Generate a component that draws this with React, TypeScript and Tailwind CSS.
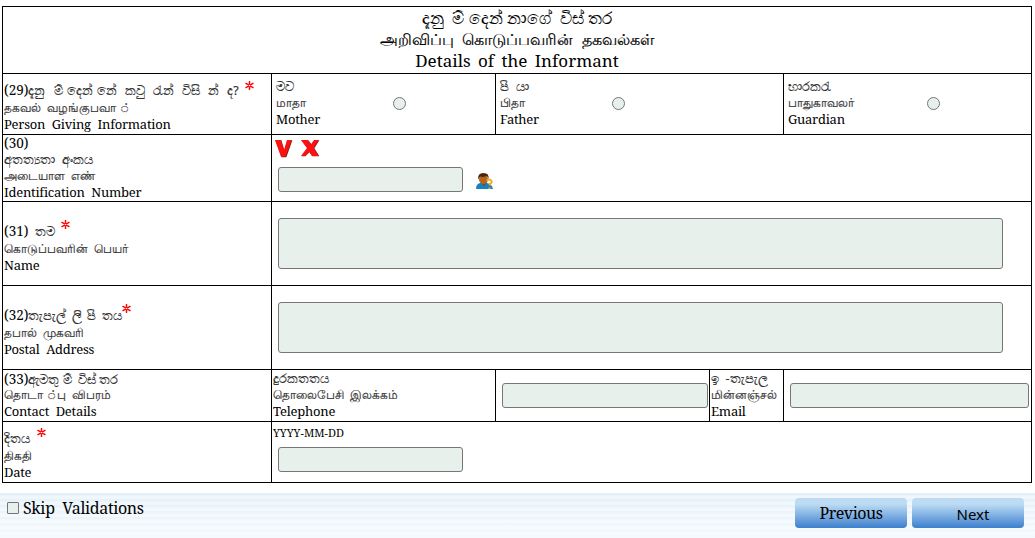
import type { ReactNode } from "react";

const field = "shrink-0 rounded-[3px] border border-[#767676] bg-[#e7f0ea] outline-none";

function Line({ children, className = "" }: { children: ReactNode; className?: string }) {
  return <div className={`whitespace-pre ${className}`}>{children}</div>;
}

function Star({ className = "" }: { className?: string }) {
  return (
    <svg viewBox="0 0 8 8" className={`inline-block h-[9px] w-[9px] ${className}`} fill="none" stroke="#f00" strokeWidth="1.3" strokeLinecap="round">
      <path d="M4 .5v7M.9 2.2l6.2 3.6M.9 5.8l6.2-3.6" />
      <circle cx="4" cy="4" r=".6" fill="#fff" stroke="none" />
    </svg>
  );
}

function Cell({ children, className = "" }: { children?: ReactNode; className?: string }) {
  return <div className={`bg-white ${className}`}>{children}</div>;
}

const sinhala = "font-['Noto_Sans',sans-serif] text-[12.5px] text-[#333] [-webkit-text-stroke:0.2px]";
const tamil = "font-['Noto_Sans',sans-serif] text-[12px] text-[#333] [-webkit-text-stroke:0.2px]";
const latin = "font-['Noto_Serif','Liberation_Serif',serif] text-[13px] tracking-[-0.25px] [word-spacing:0.2px]";
const number = "font-['Noto_Serif','Liberation_Serif',serif] text-[13.5px] text-black [-webkit-text-stroke:0px]";

function Choice({ si, ta, en, radio, name }: { si: string; ta: string; en: string; radio: string; name: string }) {
  return (
    <div className="flex pl-1 pt-[5px]">
      <div className={`shrink-0 ${radio}`}>
        <Line className={`h-4 leading-4 ${sinhala}`}>{si}</Line>
        <Line className={`h-4 leading-4 ${tamil}`}>{ta}</Line>
        <Line className={`h-4 leading-4 ${latin}`}>{en}</Line>
      </div>
      <input type="radio" name="informant" aria-label={name} className="mt-[18px] h-[13px] w-[13px] appearance-none rounded-full border border-[#767676] bg-[#e7f0ea]" />
    </div>
  );
}

export default function App() {
  return (
    <main className="h-[538px] w-[1035px] overflow-hidden bg-white pt-1.5 font-['Noto_Serif','Liberation_Serif',serif] text-black">
      <section className="ml-0.5 grid w-[1030px] grid-cols-[268px_223px_213px_73px_247px] grid-rows-[66px_60px_66px_83px_83px_51px_60px] gap-px border border-black bg-black">
        <Cell className="col-span-5 text-center">
          <Line className="h-[21px] font-['Noto_Sans',sans-serif] text-[17px] leading-[22px] [-webkit-text-stroke:0.2px]">දැනු  ම් දෙන් නාගේ  විස් තර</Line>
          <Line className="h-[21px] font-['Noto_Sans',sans-serif] text-[16px] leading-[22px] [-webkit-text-stroke:0.2px]">அறிவிப்பு  கொடுப்பவரின்  தகவல்கள்</Line>
          <Line className="h-[22px] text-[17px] leading-[23px] [word-spacing:3px]">Details of the Informant</Line>
        </Cell>

        <Cell className="pl-px pt-[6px]">
          <Line className={`h-5 leading-5 [word-spacing:0.8px] ${sinhala}`}><span className={number}>(29)</span>දැනු  ම් දෙන් නේ  කවු  රැන්  විසි  න්  ද? <Star className="ml-0.5 align-[5px]" /></Line>
          <Line className={`h-4 leading-4 ${tamil}`}>தகவல்  வழங்குபவா ்</Line>
          <Line className={`h-4 leading-[17px] ${latin}`}>Person  Giving  Information</Line>
        </Cell>
        <Cell><Choice si="මව" ta="மாதா" en="Mother" radio="w-[117px]" name="Mother" /></Cell>
        <Cell className="col-span-2"><Choice si="පි  යා" ta="பிதா" en="Father" radio="w-[112px]" name="Father" /></Cell>
        <Cell><Choice si="භාරකරැ" ta="பாதுகாவலர்" en="Guardian" radio="w-[139px]" name="Guardian" /></Cell>

        <Cell className="pl-px">
          <Line className={`h-[17px] leading-4 ${number}`}>(30)</Line>
          <Line className={`h-4 leading-4 ${sinhala}`}>අතත්‍යතා  අංකය</Line>
          <Line className={`h-4 leading-4 ${tamil}`}>அடையாள  எண்</Line>
          <Line className={`h-4 leading-4 ${latin}`}>Identification  Number</Line>
        </Cell>
        <Cell className="col-span-4 pl-[3px] pt-[5px]">
          <svg width="46" height="18" viewBox="0 0 46 18" className="block">
            <path d="M0 0h6l3 10 3-10h5l-6 17H6ZM26 0h7l3 4 3-4h5l-5 8 5 8h-7l-3-4-4 4h-4l6-8Z" transform="translate(.4 .2)" fill="#8a2420" />
            <path d="M0 0h6l3 10 3-10h4.500l-6 16.500H6ZM26 0h6.500l3.500 4.500 3-4.500h4.500l-5 8 5 8h-6.500l-3-4.500-4 4.500h-4l6-8Z" fill="#fe1010" />
          </svg>
          <div className="flex items-center pl-[3px] pt-[9px]">
            <input aria-label="Identification Number" className={`h-[25px] w-[185px] ${field}`} />
            <svg width="18" height="17" viewBox="0 0 18 17" className="ml-[13px] mt-[3px]">
              <path d="M0 16q0-5 4-6h7q5 1 6 6Z" fill="#1681c2" />
              <path d="M5 9l3 4 3-4Z" fill="#7b461c" />
              <ellipse cx="7.500" cy="6.500" rx="4.500" ry="4.500" fill="#b5651d" />
              <path d="M2.500 6.500Q1 0 7.500 0q6 0 5 6L11 3 7 4 4 3.500Z" fill="#50240b" />
              <path d="M11 8q1-2 3-1.300 3.500 2 0 4.300l-.5 1.500M13.500 14.500v1.500" stroke="#f5ad19" strokeWidth="2" fill="none" />
            </svg>
          </div>
        </Cell>

        <Cell className="pl-px pt-[18px]">
          <Line className={`h-5 leading-5 ${sinhala}`}><span className={number}>(31)  </span>තම <Star className="ml-0.5 align-[7px]" /></Line>
          <Line className={`h-[17px] leading-[17px] ${tamil}`}>கொடுப்பவரின்  பெயர்</Line>
          <Line className={`h-4 leading-[17px] ${latin}`}>Name</Line>
        </Cell>
        <Cell className="col-span-4 pl-1.5 pt-4">
          <textarea aria-label="Name" className={`block h-[51px] w-[725px] resize-none ${field}`} />
        </Cell>

        <Cell className="pl-px pt-[18px]">
          <Line className={`h-5 leading-5 [word-spacing:-0.5px] ${sinhala}`}><span className={number}>(32)</span>තැපැල්  ලි  පි  තය<Star className="align-[7px]" /></Line>
          <Line className={`h-[17px] leading-[17px] ${tamil}`}>தபால்  முகவரி</Line>
          <Line className={`h-4 leading-[17px] ${latin}`}>Postal  Address</Line>
        </Cell>
        <Cell className="col-span-4 pl-1.5 pt-4">
          <textarea aria-label="Postal Address" className={`block h-[51px] w-[725px] resize-none ${field}`} />
        </Cell>

        <Cell className="pl-px pt-px">
          <Line className={`h-4 leading-4 ${sinhala}`}><span className={number}>(33)</span>ඇමතු ම්  විස් තර</Line>
          <Line className={`h-4 leading-4 ${tamil}`}>தொடா ்பு  விபரம்</Line>
          <Line className={`h-4 leading-4 ${latin}`}>Contact  Details</Line>
        </Cell>
        <Cell className="pl-px pt-px">
          <Line className={`h-4 leading-4 ${sinhala}`}>දුරකතතය</Line>
          <Line className={`h-4 leading-4 ${tamil}`}>தொலைபேசி  இலக்கம்</Line>
          <Line className={`h-4 leading-4 ${latin}`}>Telephone</Line>
        </Cell>
        <Cell className="pl-1.5 pt-[13px]"><input aria-label="Telephone" className={`block h-[25px] w-[206px] ${field}`} /></Cell>
        <Cell className="pl-px pt-px">
          <Line className={`h-4 leading-4 ${sinhala}`}>ඉ  -තැපැල</Line>
          <Line className={`h-4 leading-4 ${tamil}`}>மின்னஞ்சல்</Line>
          <Line className={`h-4 leading-4 ${latin}`}>Email</Line>
        </Cell>
        <Cell className="pl-1.5 pt-[13px]"><input aria-label="Email" className={`block h-[25px] w-[239px] ${field}`} /></Cell>

        <Cell className="pl-px pt-1.5">
          <Line className={`h-5 leading-5 ${sinhala}`}>දිතය  <Star className="align-[6px]" /></Line>
          <Line className={`h-4 leading-4 ${tamil}`}>திகதி</Line>
          <Line className={`h-4 leading-[17px] ${latin}`}>Date</Line>
        </Cell>
        <Cell className="col-span-4 pl-px pt-[2px]">
          <Line className="h-[18px] text-[11px] leading-[17px]">YYYY-MM-DD</Line>
          <input aria-label="Date" className={`ml-[5px] mt-[5px] block h-[25px] w-[185px] ${field}`} />
        </Cell>
      </section>

      <footer className="mt-[10px] flex h-[45px] w-full items-start justify-between bg-[linear-gradient(transparent,rgba(255,255,255,.6)),repeating-linear-gradient(#e4f0f9_0px,#e4f0f9_2px,#eff7fc_3px,#eff7fc_6px)] pl-[7px] pr-[11px] pt-[5px]">
        <label className="flex items-start">
          <input type="checkbox" className="mt-1 h-3 w-3 appearance-none rounded-[1px] border border-[#767676] bg-[#e7f0ea]" />
          <span className="ml-1 whitespace-pre text-[16px] leading-5 tracking-[-0.35px]">Skip  Validations</span>
        </label>
        <div className="flex gap-[5px]">
          <button className="h-[30px] w-28 whitespace-pre rounded-[4px] bg-linear-to-b from-[#bddcf3] from-20% to-[#3b7fcd] text-[16px] leading-[29px] tracking-[-0.45px]">Previous</button>
          <button className="h-[30px] w-28 rounded-[4px] bg-linear-to-b from-[#bddcf3] from-20% to-[#3b7fcd] pl-2.5 pt-[2px] font-['Noto_Sans',sans-serif] text-[15px] leading-7">Next</button>
        </div>
      </footer>
    </main>
  );
}
